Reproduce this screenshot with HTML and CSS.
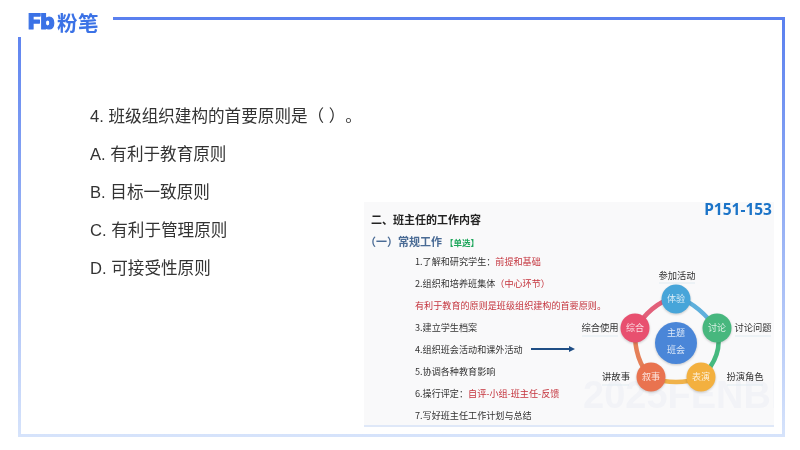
FILE: index.html
```html
<!DOCTYPE html>
<html lang="zh-CN">
<head>
<meta charset="utf-8">
<title>班级组织建构</title>
<link rel="stylesheet" href="styles.css">
</head>
<body>
<main class="slide">
  <div class="logo">
    <svg class="logo-mark" width="28" height="20" viewBox="0 0 28 20"><text class="logo-fb" x="1" y="16">Fb</text></svg>
    <span class="logo-cn">粉笔</span>
  </div>
  <div class="frame">
    <ul class="question">
      <li>4. 班级组织建构的首要原则是（ ）。</li>
      <li>A. 有利于教育原则</li>
      <li>B. 目标一致原则</li>
      <li>C. 有利于管理原则</li>
      <li>D. 可接受性原则</li>
    </ul>
    <figure class="shot">
      <div class="watermark">2025FENBI</div>
      <div class="page-ref">P151-153</div>
      <h2 class="shot-title">二、班主任的工作内容</h2>
      <h3 class="shot-sub">（一）常规工作<span class="tag">【单选】</span></h3>
      <ol class="items">
        <li>1.了解和研究学生：<em>前提和基础</em></li>
        <li>2.组织和培养班集体<em>（中心环节）</em></li>
        <li><em>有利于教育的原则是班级组织建构的首要原则。</em></li>
        <li>3.建立学生档案</li>
        <li class="with-arrow">4.组织班会活动和课外活动
          <svg class="arrow" width="44" height="8" viewBox="0 0 44 8"><path d="M0 4H39" stroke="#1f4e85" stroke-width="2"/><path d="M38 1l6 3-6 3z" fill="#1f4e85"/></svg>
        </li>
        <li>5.协调各种教育影响</li>
        <li>6.操行评定：<em>自评-小组-班主任-反馈</em></li>
        <li>7.写好班主任工作计划与总结</li>
      </ol>
      <svg class="diagram" width="210" height="170" viewBox="0 0 210 170">
        <g fill="none" stroke-width="4.5">
          <path d="M112 16Q137 26 153 50" stroke="#5fb0dc"/>
          <path d="M153 50Q160 75 137 98" stroke="#46b97f"/>
          <path d="M137 98Q112 106 87 98" stroke="#f0b24a"/>
          <path d="M87 98Q70 80 71 50" stroke="#e58058"/>
          <path d="M71 50Q85 25 112 16" stroke="#e2607a"/>
        </g>
        <g class="rules">
          <path d="M95 3H131"/>
          <path d="M171 56H207"/>
          <path d="M163 105H199"/>
          <path d="M38 105H65"/>
          <path d="M18 56H54"/>
        </g>
        <circle class="c-top" cx="112" cy="19" r="14.5"/>
        <circle class="c-right" cx="153" cy="48" r="14.5"/>
        <circle class="c-br" cx="137" cy="97" r="14.5"/>
        <circle class="c-bl" cx="87" cy="97" r="14.5"/>
        <circle class="c-left" cx="71" cy="48" r="14.5"/>
        <circle class="c-mid" cx="112" cy="63" r="21"/>
        <text class="in" x="112" y="22">体验</text>
        <text class="in" x="153" y="51">讨论</text>
        <text class="in" x="137" y="100">表演</text>
        <text class="in" x="87" y="100">叙事</text>
        <text class="in" x="71" y="51">综合</text>
        <text class="in" x="112" y="56">主题</text>
        <text class="in" x="112" y="73">班会</text>
        <text class="lab" x="113" y="-1">参加活动</text>
        <text class="lab" x="189" y="51">讨论问题</text>
        <text class="lab" x="181" y="100">扮演角色</text>
        <text class="lab" x="52" y="100">讲故事</text>
        <text class="lab" x="36" y="51">综合使用</text>
      </svg>
    </figure>
  </div>
</main>
</body>
</html>
```
FILE: styles.css
```css
* { box-sizing: border-box; margin: 0; padding: 0; }
html, body { width: 800px; height: 450px; background: #fff; overflow: hidden; }
body { font-family: "Liberation Sans", "Noto Sans CJK SC", sans-serif; color: #2b2b2b; text-spacing-trim: space-all; }
.slide { position: relative; width: 800px; height: 450px; padding: 17px 15px 13px 18px; }
.logo {
  position: absolute; left: 0; top: 0; width: 113px; height: 37px;
  background: #fff; padding: 13px 0 0 27px;
  display: flex; align-items: flex-start; gap: 2px; color: #3b72e6;
  filter: blur(0.35px);
}
.logo-fb {
  font-family: "Inter", sans-serif; font-weight: 800; font-size: 22px;
  letter-spacing: -0.5px; fill: #3b72e6; stroke: #3b72e6; stroke-width: 1.2px; stroke-linejoin: round;
}
.logo-cn {
  font-family: "Noto Sans CJK SC", sans-serif; font-weight: 700; font-size: 20.5px; line-height: 18px;
  letter-spacing: 0.5px;
}
.frame {
  width: 100%; height: 100%;
  border: 3px solid;
  border-image: linear-gradient(to bottom, #5a80ef, #d6e3fb) 1;
  padding: 78px 8px 7px 69px;
  display: flex; justify-content: space-between; align-items: flex-start;
}
.question { list-style: none; font-size: 16.6px; line-height: 38px; color: #333; white-space: nowrap; filter: blur(0.25px); }
.shot {
  position: relative; align-self: flex-end; width: 410px; height: 225px;
  background: #f9f9fa; border-bottom: 2px solid #dfe8f8; overflow: hidden;
  padding: 9px 0 0 7px; filter: blur(0.35px);
  font-family: "Noto Sans CJK SC", sans-serif;
}
.watermark {
  position: absolute; left: 219px; top: 173px; font: 700 38px/40px "Liberation Sans", sans-serif;
  color: #f2f3f7; white-space: nowrap;
}
.page-ref {
  position: absolute; right: 2px; top: 0; font: 700 15.5px/14px "Noto Sans", sans-serif; color: #1c74c8;
}
.shot-title { position: relative; font-size: 11px; line-height: 16px; font-weight: 700; color: #222; }
.shot-sub { position: relative; margin: 6px 0 0 -6px; font-size: 11px; line-height: 16px; font-weight: 700; color: #4a6b95; }
.tag { font-size: 8.5px; color: #1fa75c; margin-left: 3px; }
.items { position: relative; list-style: none; margin: 0 0 0 44px; font-size: 9.1px; line-height: 22px; color: #333; white-space: nowrap; }
.items em { font-style: normal; color: #c4333c; }
.with-arrow { display: flex; align-items: center; gap: 8px; }
.diagram { position: absolute; left: 200px; top: 78px; overflow: visible; }
.diagram circle { stroke: none; filter: drop-shadow(0 1px 1px rgba(0, 0, 0, .2)); }
.rules { fill: none; stroke: #e0ebf1; stroke-width: 1px; }
.c-top { fill: #47a5d9; }
.c-right { fill: #47b77e; }
.c-br { fill: #f3b03f; }
.c-bl { fill: #e9734f; }
.c-left { fill: #e8506f; }
.c-mid { fill: #4a86d8; }
.in { font-size: 9px; fill: #fff; fill-opacity: .8; text-anchor: middle; }
.lab { font-size: 9.3px; fill: #333; text-anchor: middle; }
```
